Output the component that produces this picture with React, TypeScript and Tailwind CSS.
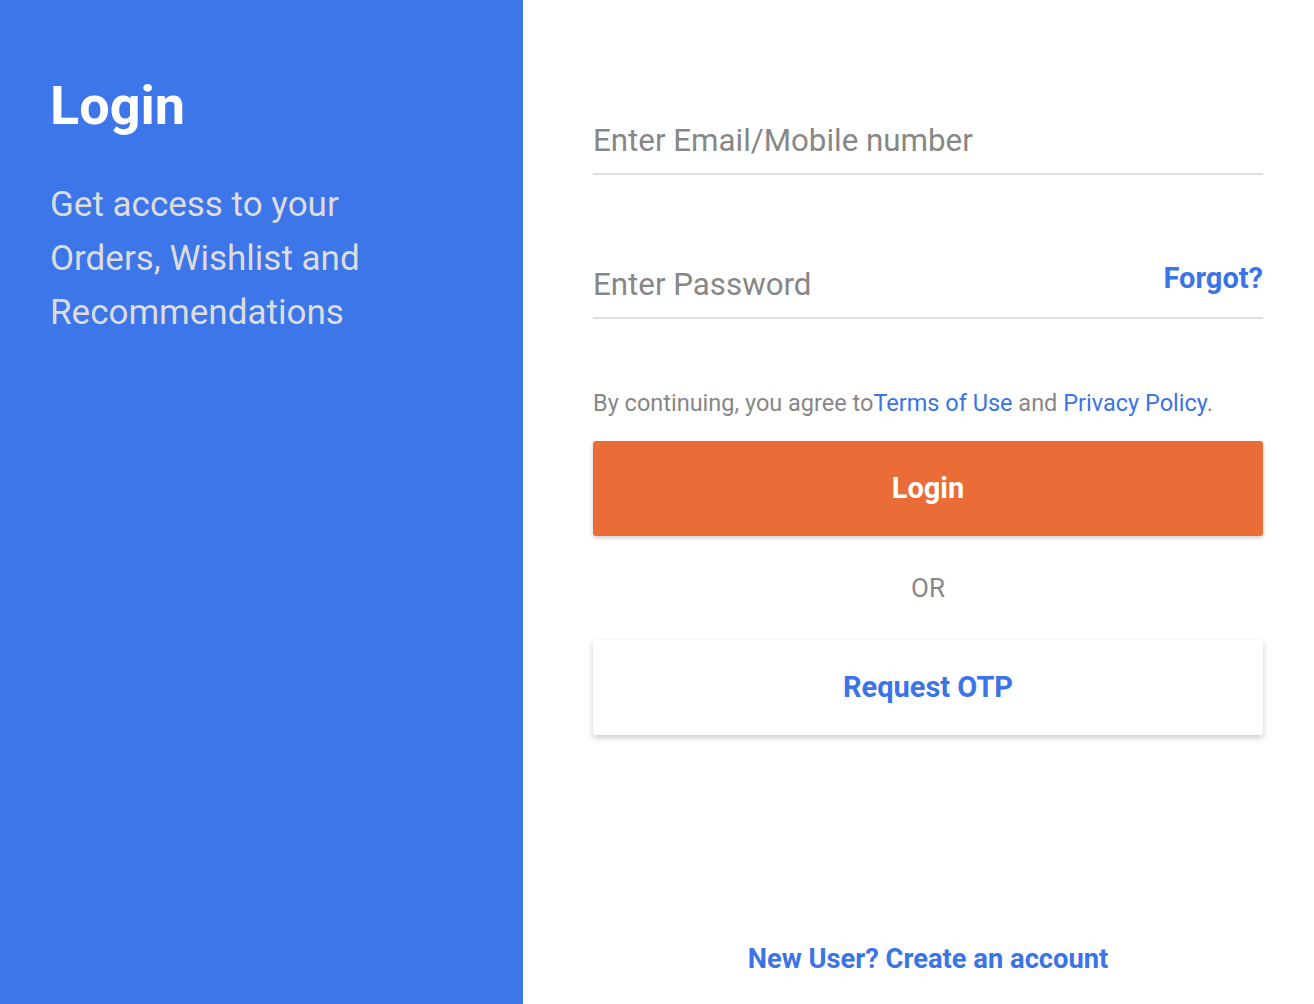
import React from 'react';

const App: React.FC = () => {
  return (
    <div className="flex h-[1004px] w-full font-['Roboto',sans-serif]">
      {/* Left info panel */}
      <aside className="w-[523px] shrink-0 bg-[#3c76e9] px-[50px] pt-[74px]">
        <h1 className="text-[54px] font-bold leading-[64px] text-white">Login</h1>
        <p className="mt-[40px] max-w-[370px] text-[35px] leading-[54px] text-[#dcdcdc]">
          Get access to your Orders, Wishlist and Recommendations
        </p>
      </aside>

      {/* Right form panel */}
      <main className="flex flex-1 flex-col bg-white pl-[70px] pr-[51px]">
        <input
          type="text"
          placeholder="Enter Email/Mobile number"
          className="mt-[108px] h-[67px] w-full border-b-2 border-[#e0e0e0] text-[31.3px] text-[#212121] outline-none placeholder:text-[#878787]"
        />

        <div className="relative mt-[77px]">
          <input
            type="password"
            placeholder="Enter Password"
            className="h-[67px] w-full border-b-2 border-[#e0e0e0] pr-[120px] text-[31.3px] text-[#212121] outline-none placeholder:text-[#878787]"
          />
          <a href="#" className="absolute right-0 top-[5px] text-[29px] font-bold text-[#3a74e6]">
            Forgot?
          </a>
        </div>

        <p className="mt-[70px] text-[23.5px] leading-[28px] text-[#878787]">
          By continuing, you agree to<a href="#" className="text-[#3a74e6]">Terms of Use</a> and{' '}
          <a href="#" className="text-[#3a74e6]">Privacy Policy</a>.
        </p>

        <button className="mt-[24px] h-[95px] w-full rounded-[3px] bg-[#ea6c36] text-[29px] font-bold text-white shadow-[0_2px_4px_rgba(0,0,0,0.2)]">
          Login
        </button>

        <div className="mt-[36px] text-center text-[26px] leading-[32px] text-[#878787]">OR</div>

        <button className="mt-[36px] h-[95px] w-full rounded-[3px] bg-white text-[29px] font-bold text-[#3a74e6] shadow-[0_3px_6px_rgba(0,0,0,0.2)]">
          Request OTP
        </button>

        <a href="#" className="mt-auto mb-[28px] text-center text-[27.3px] font-bold leading-[34px] text-[#3a74e6]">
          New User? Create an account
        </a>
      </main>
    </div>
  );
};

export default App;
